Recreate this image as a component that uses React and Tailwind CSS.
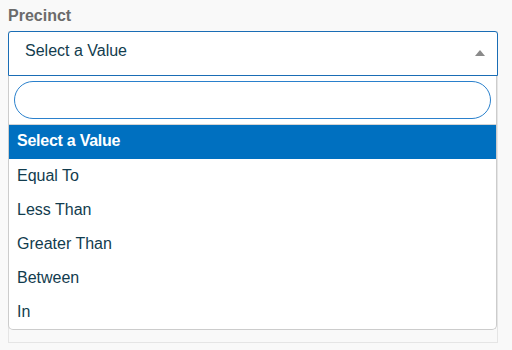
export default function App() {
  const options = ["Select a Value", "Equal To", "Less Than", "Greater Than", "Between", "In"];
  return (
    <div
      className="w-[512px] h-[350px] bg-[#f9f9f9] pl-2 pt-[6px] overflow-hidden"
      style={{ fontFamily: '"Liberation Sans", Arial, Helvetica, sans-serif' }}
    >
      <div className="text-[16px] leading-5 h-5 font-bold text-[#6b6b6b] mb-[5px]">Precinct</div>
      <div className="relative w-[490px] h-[312px] border border-[#e5e5e5]">
        <div className="absolute -left-px -top-px w-[490px]">
          <div className="h-[45px] bg-white border border-[#1a6db5] rounded-t-[3px] flex justify-between pl-4 pr-3 pt-[9px]">
            <span className="text-[16px] leading-5 text-[#123c4e]">Select a Value</span>
            <span className="mt-[9px] w-0 h-0 border-l-[5px] border-r-[5px] border-b-[6px] border-l-transparent border-r-transparent border-b-[#8a8a8a]"></span>
          </div>
          <div className="w-[489px] bg-white border border-t-0 border-[#cccccc] rounded-b-[5px] overflow-hidden">
            <div className="p-[5px] border-b border-[#d4d4d4]">
              <div className="h-[38px] rounded-full border border-[#2a80cc] bg-white"></div>
            </div>
            {options.map((o, i) => (
              <div
                key={o}
                className={
                  i === 0
                    ? "h-[34px] flex items-center pl-2 pb-[2px] bg-[#0070c0] text-white font-bold tracking-[-0.25px] text-[16px] leading-5"
                    : "h-[34px] flex items-center pl-2 text-[#123c4e] text-[16px] leading-5"
                }
              >
                {o}
              </div>
            ))}
          </div>
        </div>
      </div>
    </div>
  );
}
